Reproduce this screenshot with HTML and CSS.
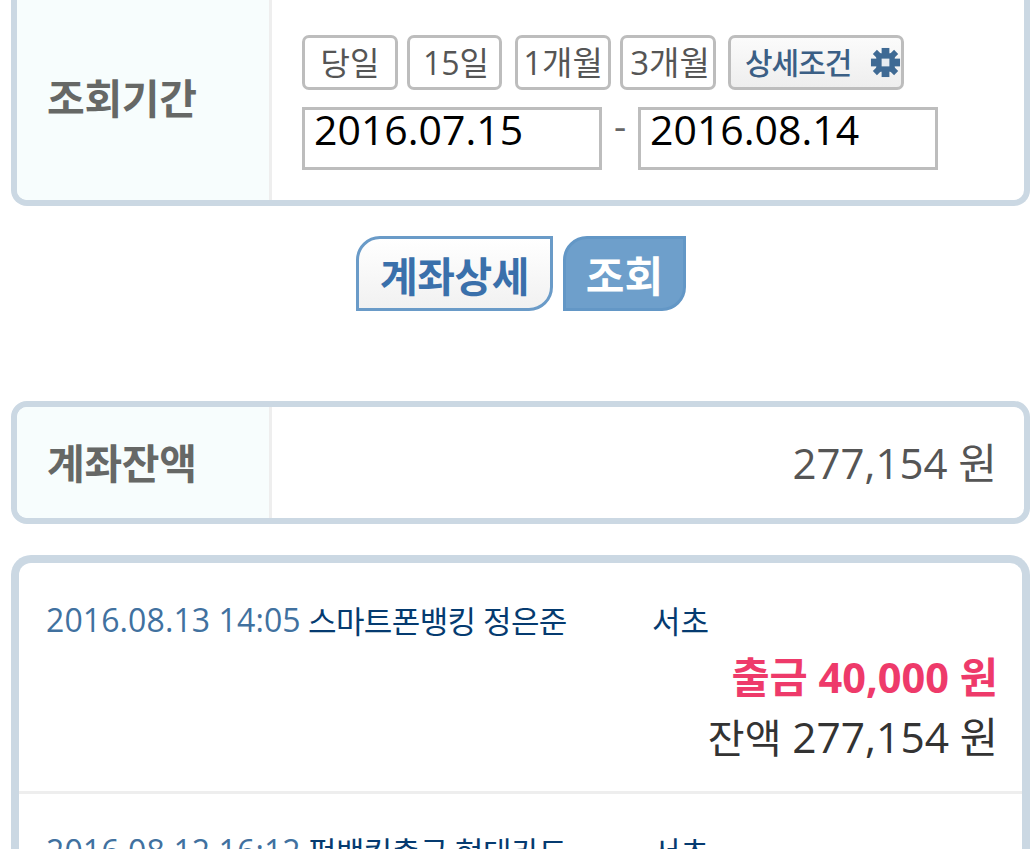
FILE: index.html
```html
<!DOCTYPE html>
<html lang="ko">
<head>
<meta charset="utf-8">
<title>계좌 조회</title>
<link rel="stylesheet" href="styles.css">
</head>
<body>
<main class="page">
  <section class="card card-period">
    <div class="label label-period">조회기간</div>
    <div class="value period">
      <div class="chips">
        <span class="chip chip-sm">당일</span>
        <span class="chip chip-sm chip-b">15일</span>
        <span class="chip chip-c">1개월</span>
        <span class="chip chip-d">3개월</span>
        <span class="chip detail">상세조건
          <svg class="gear" viewBox="0 0 32 32" aria-hidden="true">
            <g fill="#3f6a94">
              <rect x="6.5" y="6.5" width="19" height="19"/>
              <rect x="12" y="1" width="8" height="30"/>
              <rect x="1" y="12" width="30" height="8"/>
              <rect x="13" y="0.5" width="6" height="31" transform="rotate(45 16 16)"/>
              <rect x="13" y="0.5" width="6" height="31" transform="rotate(-45 16 16)"/>
            </g>
            <rect x="12" y="12" width="8" height="8" fill="#e6ebf0"/>
          </svg>
        </span>
      </div>
      <div class="dates">
        <div class="date">2016.07.15</div>
        <span class="dash">-</span>
        <div class="date">2016.08.14</div>
      </div>
    </div>
  </section>

  <div class="actions">
    <button class="btn btn-outline">계좌상세</button>
    <button class="btn btn-fill">조회</button>
  </div>

  <section class="card card-balance">
    <div class="label">계좌잔액</div>
    <div class="value balance">277,154 원</div>
  </section>

  <section class="list">
    <article class="row">
      <div class="row-head">
        <span class="when">2016.08.13 14:05</span>
        <span class="memo">스마트폰뱅킹 정은준</span>
        <span class="branch">서초</span>
      </div>
      <div class="amount">출금 40,000 원</div>
      <div class="remain"><span class="remain-label">잔액</span> <span class="remain-num">277,154</span> 원</div>
    </article>
    <article class="row">
      <div class="row-head">
        <span class="when">2016.08.12 16:12</span>
        <span class="memo">펌뱅킹출금 현대카드</span>
        <span class="branch">서초</span>
      </div>
    </article>
  </section>
</main>
</body>
</html>
```

FILE: styles.css
```css
* { box-sizing: border-box; }
html, body { margin: 0; padding: 0; background: #fff; height: 849px; overflow: hidden; }
body { font-family: "Open Sans", "Noto Sans CJK KR", sans-serif; }

.page { width: 1033px; height: 849px; overflow: hidden; padding: 0 3px 0 11px; }

.card {
  display: flex;
  border: 6px solid #cbd8e3;
  border-radius: 16px;
  background: #fff;
  overflow: hidden;
}
.card-period { height: 206px; border-top: 0; border-top-left-radius: 0; border-top-right-radius: 0; }
.card-balance { height: 123px; margin-top: 90px; }

.label {
  width: 255px;
  flex: none;
  display: flex;
  align-items: center;
  padding-left: 30px;
  padding-bottom: 4px;
  background: #f7fdfd;
  border-right: 3px solid #eeeeee;
  font-size: 41px;
  font-weight: 700;
  letter-spacing: -0.3px;
  color: #666866;
  font-family: "Noto Sans CJK KR", sans-serif;
}
.label-period { padding-bottom: 8px; }
.value { flex: 1; min-width: 0; }

.period { padding: 35px 0 0 30px; }
.chips { display: flex; gap: 9px; height: 55px; }
.chip {
  width: 96px;
  height: 55px;
  display: flex;
  align-items: center;
  justify-content: center;
  padding-bottom: 3px;
  border: 3px solid #bdbdbd;
  border-radius: 7px;
  font-size: 33px;
  color: #555;
  white-space: nowrap;
}
.chip-sm { font-size: 32px; }
.chip-b { width: 95px; padding-left: 3px; }
.chip-c { margin-left: 4px; }
.chip-d { padding-left: 4px; }
.chip.detail {
  width: 176px;
  margin-left: 3px;
  gap: 19px;
  justify-content: flex-start;
  padding-left: 14px;
  background: linear-gradient(#fbfbfb, #eeeeee);
  font-family: "Noto Sans CJK KR", sans-serif;
  font-size: 30px;
  font-weight: 500;
  letter-spacing: -1px;
  color: #3b5f85;
}
.gear { width: 31px; height: 31px; flex: none; margin-top: 3px; }

.dates { display: flex; align-items: flex-start; margin-top: 17px; }
.date {
  width: 300px;
  height: 63px;
  border: 3px solid #bdbdbd;
  padding-left: 9px;
  font-size: 41px;
  line-height: 38px;
  color: #000;
  background: #fff;
}
.dash { width: 36px; text-align: center; font-size: 38px; line-height: 36px; color: #666; }

.actions { display: flex; justify-content: center; gap: 10px; margin-top: 30px; height: 75px; padding-left: 1px; }
.btn {
  height: 75px;
  font-family: "Noto Sans CJK KR", sans-serif;
  font-size: 41px;
  font-weight: 700;
  padding: 0;
  border: 3px solid #6a9bc8;
  border-radius: 24px 0 24px 0;
}
.btn-outline { width: 197px; color: #3a70ab; letter-spacing: -0.5px; background: linear-gradient(#ffffff, #f1f1f1); }
.btn-fill { width: 123px; font-size: 42px; color: #fff; background: #6e9fcb; border-color: #6397c6; }

.balance {
  display: flex;
  align-items: center;
  justify-content: flex-end;
  padding: 0 27px 4px 0;
  font-size: 42px;
  color: #555;
}

.list {
  margin-top: 31px;
  height: 320px;
  border: 8px solid #cbd8e3;
  border-bottom: 0;
  border-radius: 20px 20px 0 0;
  background: #fff;
}
.row { height: 231px; padding: 36px 24px 0 27px; border-bottom: 3px solid #eeeeee; }
.row-head { display: flex; height: 40px; align-items: center; font-size: 31px; white-space: nowrap; }
.when { width: 262px; font-size: 32px; letter-spacing: 0.1px; color: #41719f; }
.memo { width: 344px; color: #053b70; letter-spacing: -0.6px; }
.branch { color: #053b70; }
.amount { margin-top: 11px; text-align: right; font-size: 41.5px; line-height: 54px; font-weight: 700; color: #ee3a6a; }
.remain { margin-top: 6px; text-align: right; font-size: 41.5px; line-height: 54px; color: #333; }
.remain-label { font-size: 40px; }
.remain-num { font-size: 42.5px; }
```
